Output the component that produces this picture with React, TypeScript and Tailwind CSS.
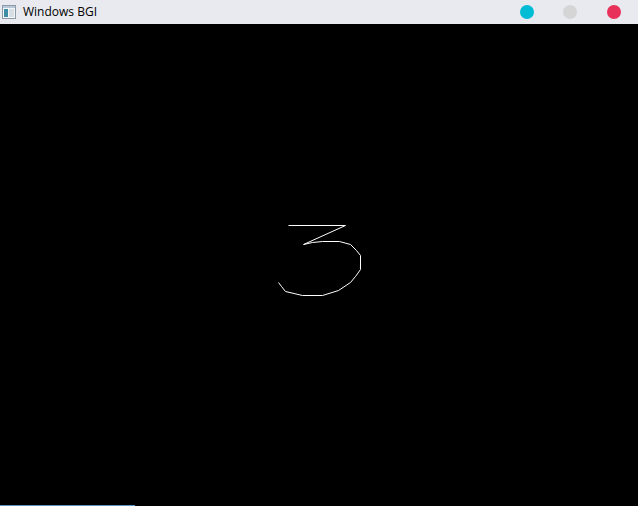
import { type FC } from "react";

const pts: [number, number][] = [
  [303, 244],
  [312, 242],
  [322, 241],
  [339, 241],
  [350, 244],
  [356, 250],
  [360, 255],
  [360, 269],
  [355, 276],
  [350, 282],
  [338, 290],
  [322, 295],
  [302, 295],
  [285, 291],
  [281, 286],
  [278, 282],
];

const WinIcon: FC = () => (
  <svg width="14" height="14" viewBox="0 0 14 14">
    <rect x="0.5" y="0.5" width="13" height="13" fill="#f4f6f8" stroke="#8a9aa8" />
    <rect x="1" y="1" width="12" height="2" fill="#b9c8d6" />
    <rect x="2" y="4" width="4" height="8" fill="#3c8ea6" />
    <rect x="7" y="4" width="5" height="8" fill="#d7dee4" />
  </svg>
);

const App: FC = () => {
  // the BGI canvas starts 24px down, so shift the drawing up (+0.5 keeps 1px lines crisp)
  const toLocal = (p: [number, number]) => `${p[0] + 0.5},${p[1] - 24 + 0.5}`;
  return (
    <div className="flex h-[506px] w-[638px] flex-col bg-black font-['Open_Sans','Noto_Sans',sans-serif]">
      <div className="flex h-6 shrink-0 items-center bg-[#e9eaf0]">
        <div className="ml-[2px] mr-[7px] flex items-center">
          <WinIcon />
        </div>
        <span className="text-[12px] leading-none text-black">Windows BGI</span>
        <div className="ml-auto mr-[17px] flex items-center">
          <span className="mr-[29px] h-[14px] w-[14px] rounded-full bg-[#00bcd4]" />
          <span className="mr-[30px] h-[14px] w-[14px] rounded-full bg-[#d5d5d5]" />
          <span className="h-[14px] w-[14px] rounded-full bg-[#e8325a]" />
        </div>
      </div>
      <div className="flex-1">
        <svg width="638" height="481" viewBox="0 0 638 481" className="block">
          <polyline
            points={[toLocal([288, 225]), toLocal([345, 225]), toLocal([303, 244])].join(" ")}
            fill="none"
            stroke="white"
            strokeWidth="1"
          />
          <polyline
            points={pts.map(toLocal).join(" ")}
            fill="none"
            stroke="white"
            strokeWidth="1"
          />
        </svg>
      </div>
      <div className="flex h-px shrink-0">
        <div className="w-[135px] bg-[#5b93bf]" />
      </div>
    </div>
  );
};

export default App;
